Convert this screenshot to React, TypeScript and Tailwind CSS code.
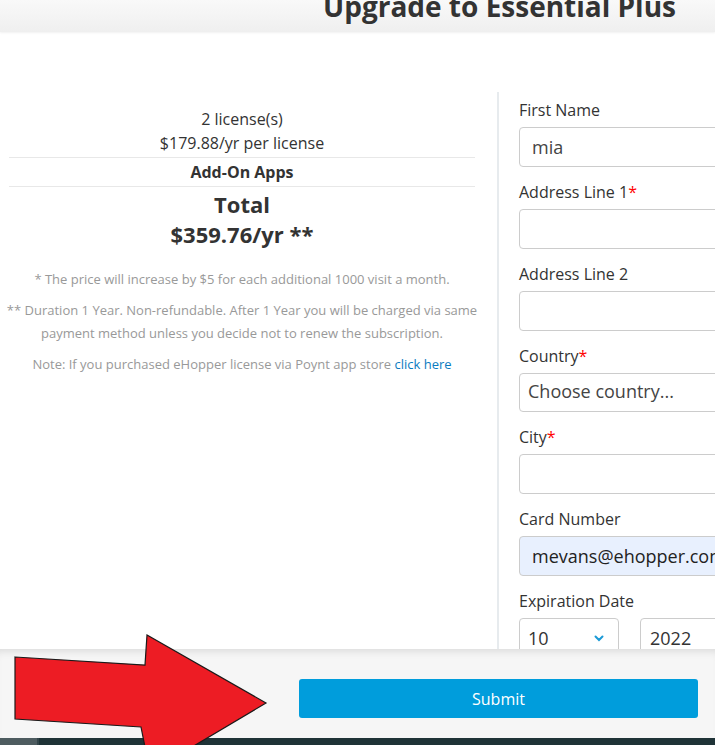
import type { ReactNode } from "react";

function Field({ label, required, children }: { label: string; required?: boolean; children: ReactNode }) {
    return (
        <div className="mb-[13px]">
            <div className="text-[16px] leading-[24px] mb-[5px] text-[#333]">
                {label}
                {required && <span className="text-[#ff0000]">*</span>}
            </div>
            {children}
        </div>
    );
}

function Chevron() {
    return (
        <svg width="10" height="7" viewBox="0 0 10 7" className="shrink-0">
            <path d="M1.5 1.5 L5 5 L8.5 1.5" fill="none" stroke="#1b9ad6" strokeWidth="2" strokeLinecap="round" />
        </svg>
    );
}

export default function App() {
    return (
        <div className="relative w-[715px] h-[745px] overflow-hidden bg-white font-['Open_Sans',sans-serif] text-[#333]">
            {/* Header */}
            <header className="relative z-10 h-[32px] overflow-hidden bg-gradient-to-b from-[#f9f9f9] to-[#efefef] shadow-[0_1px_2px_rgba(0,0,0,0.06)]">
                <h1 className="pl-[323px] -mt-[8px] text-[28px] leading-[28px] font-bold whitespace-nowrap text-[#333]">
                    Upgrade to Essential Plus
                </h1>
            </header>

            {/* Body */}
            <main className="h-[617px] overflow-hidden flex pt-[60px]">
                <div className="w-[497px] shrink-0 pl-[9px] pr-[22px] pt-[15px] text-center">
                    <p className="text-[16px] leading-[24px]">2 license(s)</p>
                    <p className="text-[16px] leading-[24px]">$179.88/yr per license</p>
                    <div className="mt-[2px] h-px bg-[#e8e8e8]" />
                    <p className="mt-[2px] text-[16px] leading-[24px] font-bold">Add-On Apps</p>
                    <div className="mt-[2px] h-px bg-[#e8e8e8]" />
                    <p className="mt-[2px] text-[22px] leading-[30px] font-bold">Total</p>
                    <p className="text-[22px] leading-[30px] font-bold">$359.76/yr **</p>
                    <div className="mt-[19px] -mx-[6px] text-[13px] leading-[23px] text-[#999] space-y-[8px]">
                        <p>* The price will increase by $5 for each additional 1000 visit a month.</p>
                        <p>** Duration 1 Year. Non-refundable. After 1 Year you will be charged via same payment method unless you decide not to renew the subscription.</p>
                        <p>
                            Note: If you purchased eHopper license via Poynt app store <span className="text-[#0b7cc1]">click here</span>
                        </p>
                    </div>
                </div>

                <div className="w-[2px] shrink-0 bg-[#e7ebee]" />

                <div className="w-[320px] shrink-0 pl-[20px] pt-[6px]">
                    <Field label="First Name">
                        <div className="h-[40px] w-[260px] border border-[#ccc] rounded-[4px] flex items-center pl-[12px] text-[18px] text-[#444]">mia</div>
                    </Field>
                    <Field label="Address Line 1" required>
                        <div className="h-[40px] w-[260px] border border-[#ccc] rounded-[4px]" />
                    </Field>
                    <Field label="Address Line 2">
                        <div className="h-[40px] w-[260px] border border-[#ccc] rounded-[4px]" />
                    </Field>
                    <Field label="Country" required>
                        <div className="h-[39px] w-[260px] border border-[#ccc] rounded-[4px] flex items-center pl-[8px] pb-[2px] text-[18px] text-[#444] whitespace-nowrap">Choose country...</div>
                    </Field>
                    <Field label="City" required>
                        <div className="h-[40px] w-[260px] border border-[#ccc] rounded-[4px]" />
                    </Field>
                    <Field label="Card Number">
                        <div className="h-[40px] w-[260px] border border-[#ccc] rounded-[4px] bg-[#e8f0fe] flex items-center pl-[12px] text-[18px] text-[#222] whitespace-nowrap">mevans@ehopper.com</div>
                    </Field>
                    <Field label="Expiration Date">
                        <div className="flex gap-[21px]">
                            <div className="h-[40px] w-[100px] border border-[#ccc] rounded-[4px] flex items-center justify-between pl-[8px] pr-[14px] text-[18px] text-[#333]">
                                10
                                <Chevron />
                            </div>
                            <div className="h-[40px] w-[120px] border border-[#ccc] rounded-[4px] flex items-center pl-[9px] text-[18px] text-[#333]">2022</div>
                        </div>
                    </Field>
                </div>
            </main>

            {/* Footer */}
            <footer className="h-[89px] bg-[#f6f6f6] shadow-[inset_0_8px_8px_-6px_rgba(0,0,0,0.12)] flex justify-end items-start pt-[30px] pr-[17px]">
                <button className="w-[399px] h-[39px] rounded-[3px] bg-[#009ddc] text-white text-[16px]">Submit</button>
            </footer>

            <div className="h-[7px] flex">
                <div className="w-[37px] bg-[#4e5c60]" />
                <div className="w-[2px] bg-[#33454a]" />
                <div className="flex-1 bg-[#1f3337]" />
            </div>

            {/* Red arrow annotation */}
            <svg className="absolute left-0 top-0 pointer-events-none" width="715" height="745" viewBox="0 0 715 745">
                <polygon
                    points="15,657 145,665 147,635 266,703 150,772 141,727 15,719"
                    fill="#ed1c24"
                    stroke="#1a1a1a"
                    strokeWidth="1.2"
                    strokeLinejoin="miter"
                />
            </svg>
        </div>
    );
}
